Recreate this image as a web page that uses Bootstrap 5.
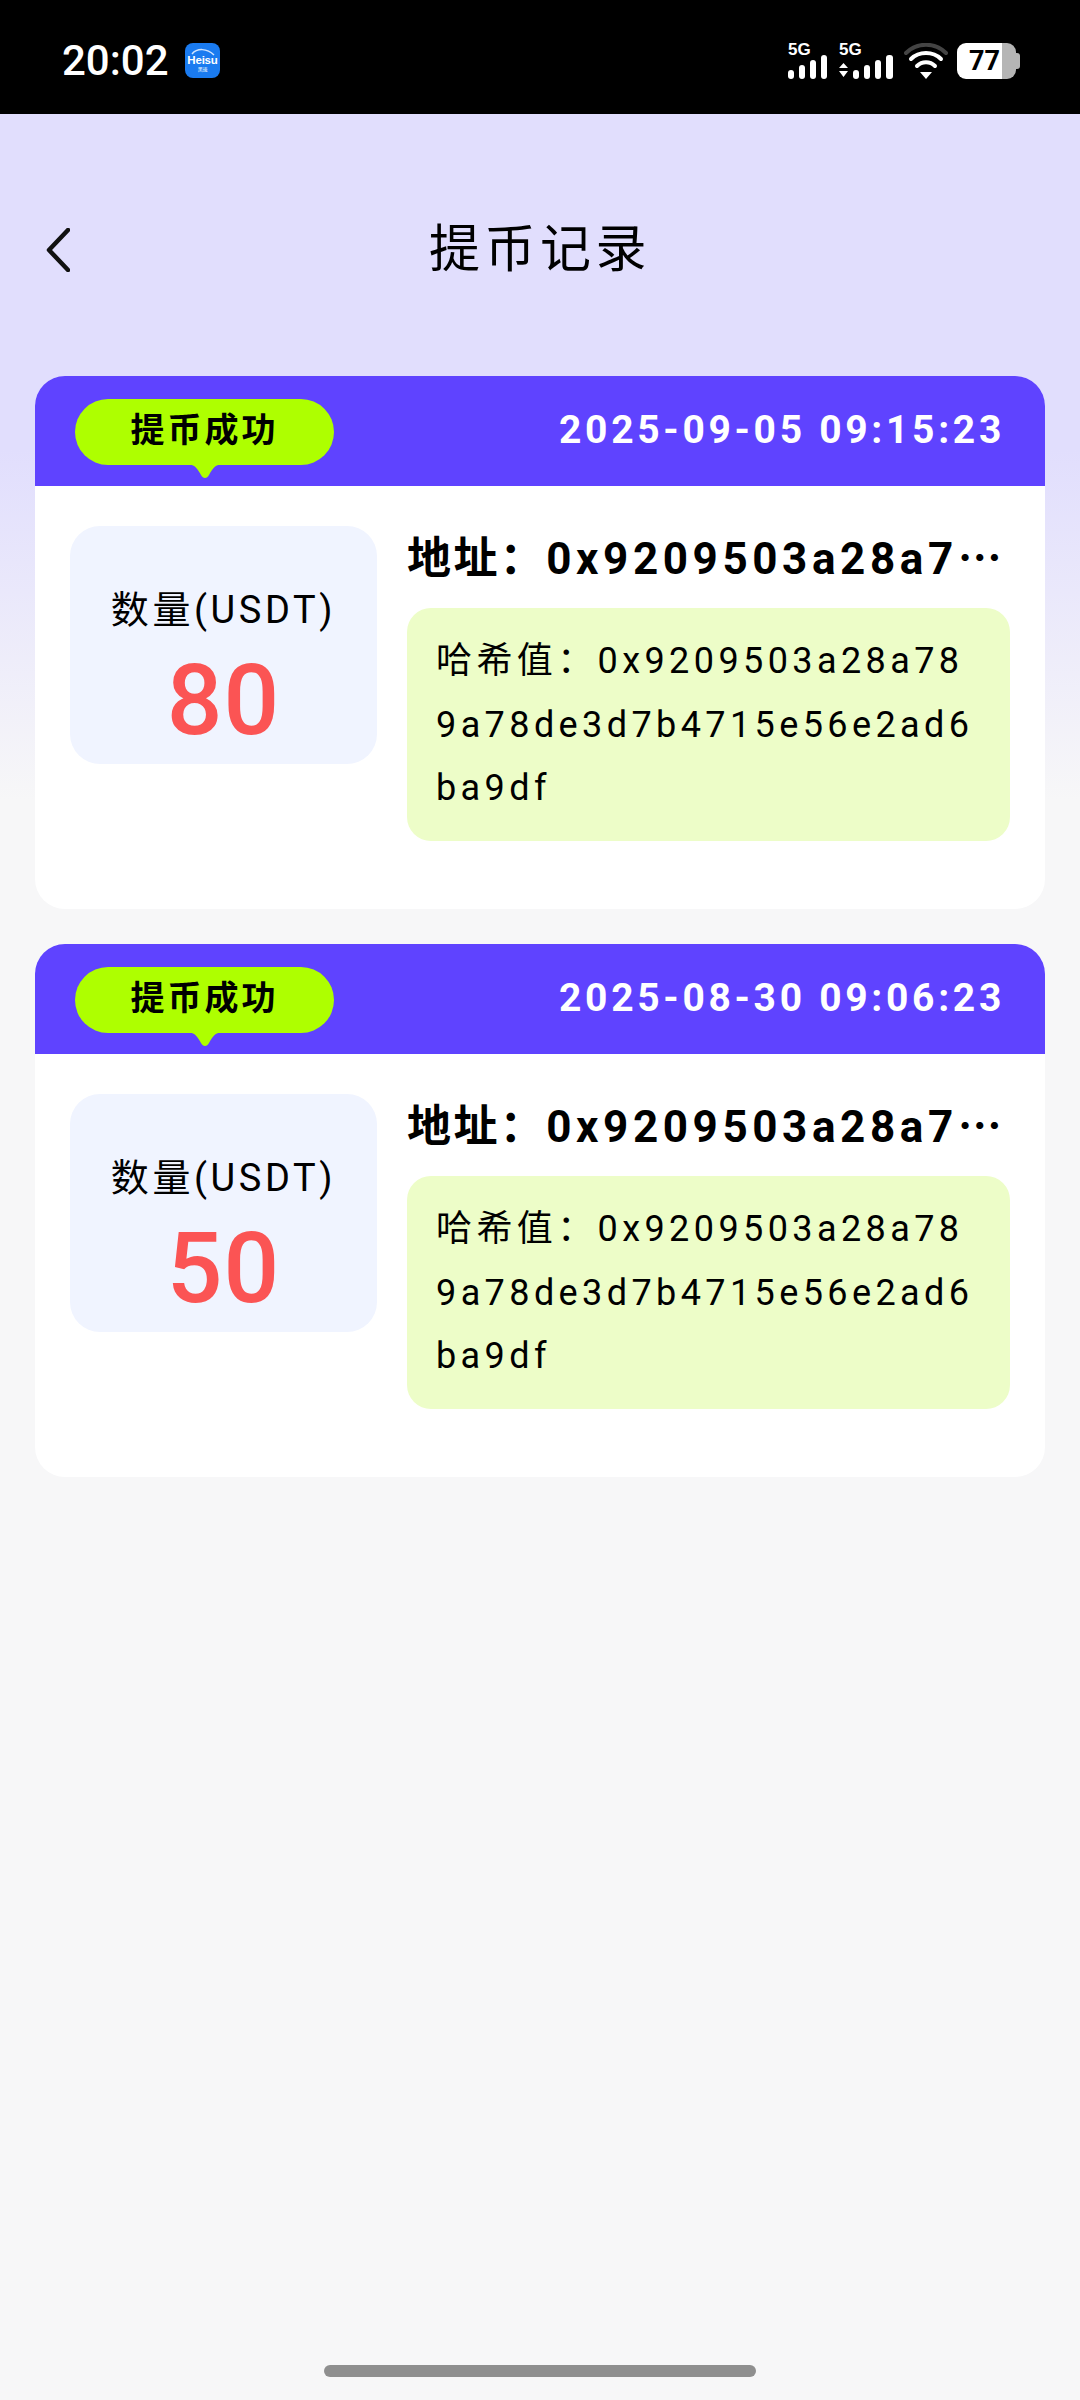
<!DOCTYPE html>
<html lang="zh-CN">
<head>
  <meta charset="UTF-8">
  <meta name="viewport" content="width=device-width, initial-scale=1">
  <title>提币记录</title>
  <link href="https://cdn.jsdelivr.net/npm/bootstrap@5.3.0/dist/css/bootstrap.min.css" rel="stylesheet">
  <style>
    body {
      font-family: Roboto, "Noto Sans CJK SC", sans-serif;
      background: #f7f7f8;
      color: #000;
    }
    .page-wrap {
      min-height: 2400px;
      position: relative;
      background: linear-gradient(180deg, #e1defd 0, #e1defd 450px, #f7f7f8 800px);
    }
    .status-row {
      height: 114px;
      background: #000;
      color: #fff;
      padding: 43px 60px 0 62px;
      align-items: flex-start;
    }
    .clock {
      font-size: 42px;
      line-height: 36px;
      font-weight: 500;
      width: 123px;
    }
    .app-tile {
      position: relative;
      width: 35px;
      height: 35px;
      background: #1a7bf0;
      border-radius: 8px;
      font-family: "Liberation Sans", sans-serif;
      font-size: 11.5px;
      font-weight: 700;
      line-height: 11px;
      padding-top: 12px;
      letter-spacing: -.2px;
      text-align: center;
    }
    .tile-sub { display: block; font-family: "Noto Sans CJK SC", sans-serif; font-size: 5px; line-height: 6px; font-weight: 400; }
    .tile-arc { position: absolute; left: 0; top: 0; }
    .sig-box { width: 41px; position: relative; height: 36px; margin-right: 10px; }
    .sig-wide { width: 54px; margin-right: 11px; }
    .sig-label {
      font-family: "Liberation Sans", sans-serif;
      font-size: 17px;
      font-weight: 700;
      line-height: 13px;
      display: block;
    }
    .sig-box svg { position: absolute; left: 0; bottom: 0; }
    .wifi-icon { margin-right: 9px; }
    .batt {
      width: 59px;
      height: 36px;
      border-radius: 9px;
      background: linear-gradient(90deg, #fff 0, #fff 77%, #b5b5b5 77%);
      color: #000;
      font-size: 27px;
      font-weight: 700;
      line-height: 36px;
      padding-left: 12px;
    }
    .batt-tip { width: 4px; height: 16px; background: #b5b5b5; border-radius: 0 3px 3px 0; }
    .title-row {
      height: 100px;
      margin-top: 86px;
      padding: 0 46px;
      margin-bottom: 76px;
    }
    .title-text {
      font-size: 51px;
      line-height: 60px;
      font-weight: 400;
      letter-spacing: 4.5px;
      margin: 0;
    }
    .side-slot { width: 24px; }
    .rec-list { padding: 0 35px; gap: 35px; }
    .rec-card {
      border: 0;
      border-radius: 30px;
      overflow: hidden;
      background: #fff;
    }
    .rec-head {
      height: 110px;
      background: #5f43ff;
      padding: 23px 40px 0 40px;
      align-items: flex-start;
    }
    .status-pill {
      position: relative;
      width: 259px;
      height: 66px;
      border-radius: 33px;
      background: #aeff00;
      font-size: 34px;
      font-weight: 700;
      line-height: 62px;
      letter-spacing: 3px;
      text-align: center;
    }
    .pill-tail { position: absolute; left: 113px; top: 65px; }
    .rec-time {
      color: #fff;
      font-size: 39px;
      font-weight: 700;
      line-height: 62px;
      letter-spacing: 3.7px;
    }
    .rec-body { padding: 40px 35px 68px; gap: 30px; }
    .qty-box {
      width: 307px;
      height: 238px;
      flex: none;
      border-radius: 30px;
      background: #f0f4ff;
      text-align: center;
      padding-top: 59px;
    }
    .qty-label { font-size: 38px; line-height: 50px; letter-spacing: 3.6px; }
    .qty-value { font-size: 98px; line-height: 96px; color: #fb5454; margin-top: 18px; font-weight: 500; letter-spacing: 1px; }
    .rec-info { width: 603px; }
    .addr-line {
      font-size: 44px;
      font-weight: 700;
      line-height: 60px;
      padding-top: 3px;
      margin-bottom: 19px;
      letter-spacing: 4.6px;
      white-space: nowrap;
    }
    .addr-key { letter-spacing: 2.4px; }
    .hash-box {
      height: 233px;
      border-radius: 24px;
      background: #edfdc8;
      padding: 22px 30px 0 29px;
      font-size: 36px;
      line-height: 63.5px;
      letter-spacing: 4.4px;
      word-break: break-all;
    }
    .home-bar {
      position: absolute;
      left: 324px;
      top: 2365px;
      width: 432px;
      height: 12px;
      border-radius: 6px;
      background: #8f8f8f;
    }
  </style>
</head>
<body>
<div class="page-wrap">

  <!-- Status bar -->
  <div class="status-row d-flex justify-content-between">
    <div class="d-flex">
      <div class="clock">20:02</div>
      <div class="app-tile">
        <svg class="tile-arc" width="35" height="35" viewBox="0 0 35 35" fill="none"><path d="M7 11C12 5 22 5 29 12" stroke="#cfe4ff" stroke-width="1.500"/></svg>
        Heisu
        <span class="tile-sub">黑速</span>
      </div>
    </div>
    <div class="d-flex align-items-start">
      <div class="sig-box">
        <span class="sig-label">5G</span>
        <svg width="41" height="24" viewBox="0 0 41 24" fill="#fff">
          <rect x="0" y="15" width="6" height="9" rx="3"/>
          <rect x="11" y="10" width="6" height="14" rx="3"/>
          <rect x="22" y="5" width="6" height="19" rx="3"/>
          <rect x="33" y="0" width="6" height="24" rx="3"/>
        </svg>
      </div>
      <div class="sig-box sig-wide">
        <span class="sig-label">5G</span>
        <svg width="54" height="24" viewBox="0 0 54 24" fill="#fff">
          <path d="M0 13l4.500-5 4.500 5zM0 16l4.500 6 4.500-6z"/>
          <rect x="14" y="15" width="6" height="9" rx="3"/>
          <rect x="25" y="10" width="6" height="14" rx="3"/>
          <rect x="36" y="5" width="6" height="19" rx="3"/>
          <rect x="47" y="0" width="7" height="24" rx="3"/>
        </svg>
      </div>
      <svg class="wifi-icon" width="44" height="36" viewBox="0 0 44 36" fill="none" stroke-linecap="round">
        <path d="M2 10C13 -1 31 -1 42 10" stroke="#444" stroke-width="4"/>
        <path d="M7 16C15 8 29 8 37 16" stroke="#fff" stroke-width="4"/>
        <path d="M13 23C18 18 26 18 31 23" stroke="#fff" stroke-width="4"/>
        <path d="M16 29h12l-6 7z" fill="#fff"/>
      </svg>
      <div class="d-flex align-items-center">
        <div class="batt">77</div>
        <div class="batt-tip"></div>
      </div>
    </div>
  </div>

  <!-- Title -->
  <div class="title-row d-flex justify-content-between align-items-center">
    <svg class="side-slot" width="24" height="44" viewBox="0 0 24 44" fill="none">
      <path d="M22 2L3 22l19 20" stroke="#111" stroke-width="4.500" stroke-linecap="round" stroke-linejoin="round"/>
    </svg>
    <h1 class="title-text">提币记录</h1>
    <div class="side-slot"></div>
  </div>

  <!-- Records -->
  <div class="rec-list d-flex flex-column">
    <div class="card rec-card">
      <div class="rec-head d-flex justify-content-between">
        <div class="status-pill">提币成功
          <svg class="pill-tail" width="34" height="16" viewBox="0 0 34 16" fill="#aeff00"><path d="M0 0h34c-7 1-9 4-13 11-2 4-6 4-8 0C9 4 7 1 0 0z"/></svg>
        </div>
        <div class="rec-time">2025-09-05 09:15:23</div>
      </div>
      <div class="rec-body d-flex align-items-start">
        <div class="qty-box">
          <div class="qty-label">数量(USDT)</div>
          <div class="qty-value">80</div>
        </div>
        <div class="rec-info">
          <div class="addr-line"><span class="addr-key">地址：</span>0x9209503a28a7⋯</div>
          <div class="hash-box">哈希值：0x9209503a28a789a78de3d7b4715e56e2ad6ba9df</div>
        </div>
      </div>
    </div>

    <div class="card rec-card">
      <div class="rec-head d-flex justify-content-between">
        <div class="status-pill">提币成功
          <svg class="pill-tail" width="34" height="16" viewBox="0 0 34 16" fill="#aeff00"><path d="M0 0h34c-7 1-9 4-13 11-2 4-6 4-8 0C9 4 7 1 0 0z"/></svg>
        </div>
        <div class="rec-time">2025-08-30 09:06:23</div>
      </div>
      <div class="rec-body d-flex align-items-start">
        <div class="qty-box">
          <div class="qty-label">数量(USDT)</div>
          <div class="qty-value">50</div>
        </div>
        <div class="rec-info">
          <div class="addr-line"><span class="addr-key">地址：</span>0x9209503a28a7⋯</div>
          <div class="hash-box">哈希值：0x9209503a28a789a78de3d7b4715e56e2ad6ba9df</div>
        </div>
      </div>
    </div>
  </div>

  <div class="home-bar"></div>
</div>
<script src="https://cdn.jsdelivr.net/npm/bootstrap@5.3.0/dist/js/bootstrap.bundle.min.js"></script>
</body>
</html>
